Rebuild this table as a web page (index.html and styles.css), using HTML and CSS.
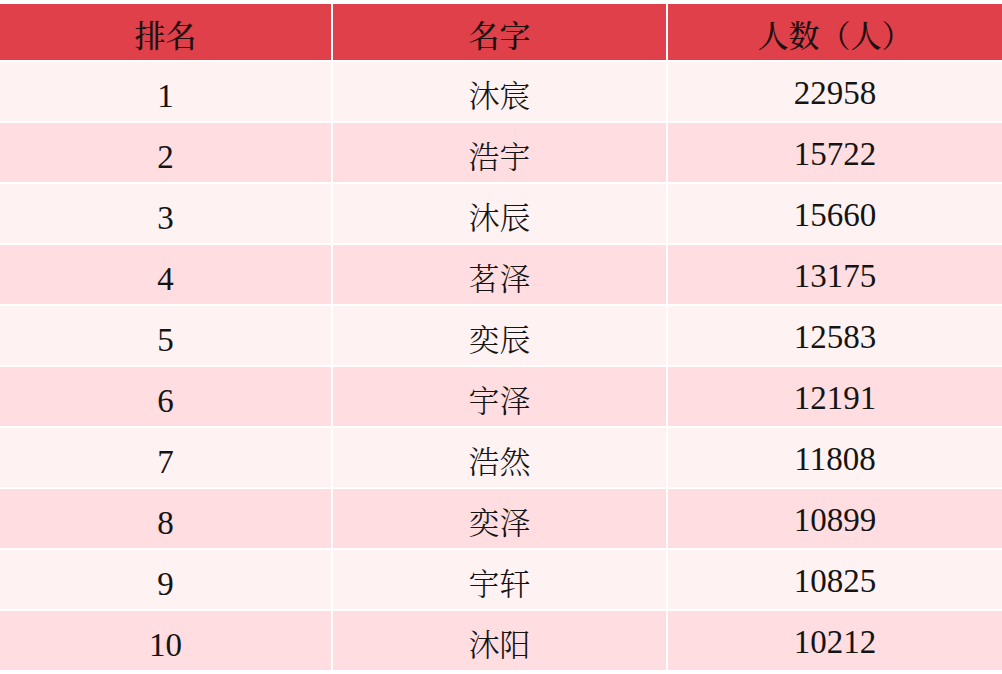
FILE: index.html
```html
<!DOCTYPE html>
<html lang="zh-CN">
<head>
<meta charset="utf-8">
<title>排名</title>
<link rel="stylesheet" href="styles.css">
</head>
<body>
<div class="table">
  <div class="row head"><div class="cell">排名</div><div class="cell">名字</div><div class="cell">人数（人）</div></div>
  <div class="row odd"><div class="cell rank">1</div><div class="cell name">沐宸</div><div class="cell num">22958</div></div>
  <div class="row even"><div class="cell rank">2</div><div class="cell name">浩宇</div><div class="cell num">15722</div></div>
  <div class="row odd"><div class="cell rank">3</div><div class="cell name">沐辰</div><div class="cell num">15660</div></div>
  <div class="row even"><div class="cell rank">4</div><div class="cell name">茗泽</div><div class="cell num">13175</div></div>
  <div class="row odd"><div class="cell rank">5</div><div class="cell name">奕辰</div><div class="cell num">12583</div></div>
  <div class="row even"><div class="cell rank">6</div><div class="cell name">宇泽</div><div class="cell num">12191</div></div>
  <div class="row odd"><div class="cell rank">7</div><div class="cell name">浩然</div><div class="cell num">11808</div></div>
  <div class="row even"><div class="cell rank">8</div><div class="cell name">奕泽</div><div class="cell num">10899</div></div>
  <div class="row odd"><div class="cell rank">9</div><div class="cell name">宇轩</div><div class="cell num">10825</div></div>
  <div class="row even"><div class="cell rank">10</div><div class="cell name">沐阳</div><div class="cell num">10212</div></div>
</div>
</body>
</html>
```
FILE: styles.css
```css
html, body {
  margin: 0;
  padding: 0;
  background: #ffffff;
}
.table {
  width: 1002px;
  padding-top: 4px;
  display: flex;
  flex-direction: column;
  gap: 2px;
  font-family: "Liberation Serif", "Noto Serif CJK SC", "Noto Sans CJK SC", serif;
  color: #141414;
}
.row {
  display: grid;
  grid-template-columns: 331px 333px 1fr;
  column-gap: 2px;
  height: 59px;
}
.row.head {
  height: 56px;
}
.cell {
  display: flex;
  align-items: center;
  justify-content: center;
  font-size: 33px;
  line-height: 1;
  padding-top: 4px;
}
.cell.rank {
  padding-top: 9px;
}
.head .cell {
  background: #e0404a;
  color: #1c1010;
  font-family: "Noto Serif CJK SC", "Noto Sans CJK SC", sans-serif;
  font-weight: 500;
  font-size: 31px;
  padding-top: 2px;
}
.odd .cell {
  background: #fff2f2;
}
.even .cell {
  background: #ffdde1;
}
.name {
  font-family: "Noto Serif CJK SC", "Noto Sans CJK SC", sans-serif;
  font-weight: 300;
  font-size: 31px;
}
```
